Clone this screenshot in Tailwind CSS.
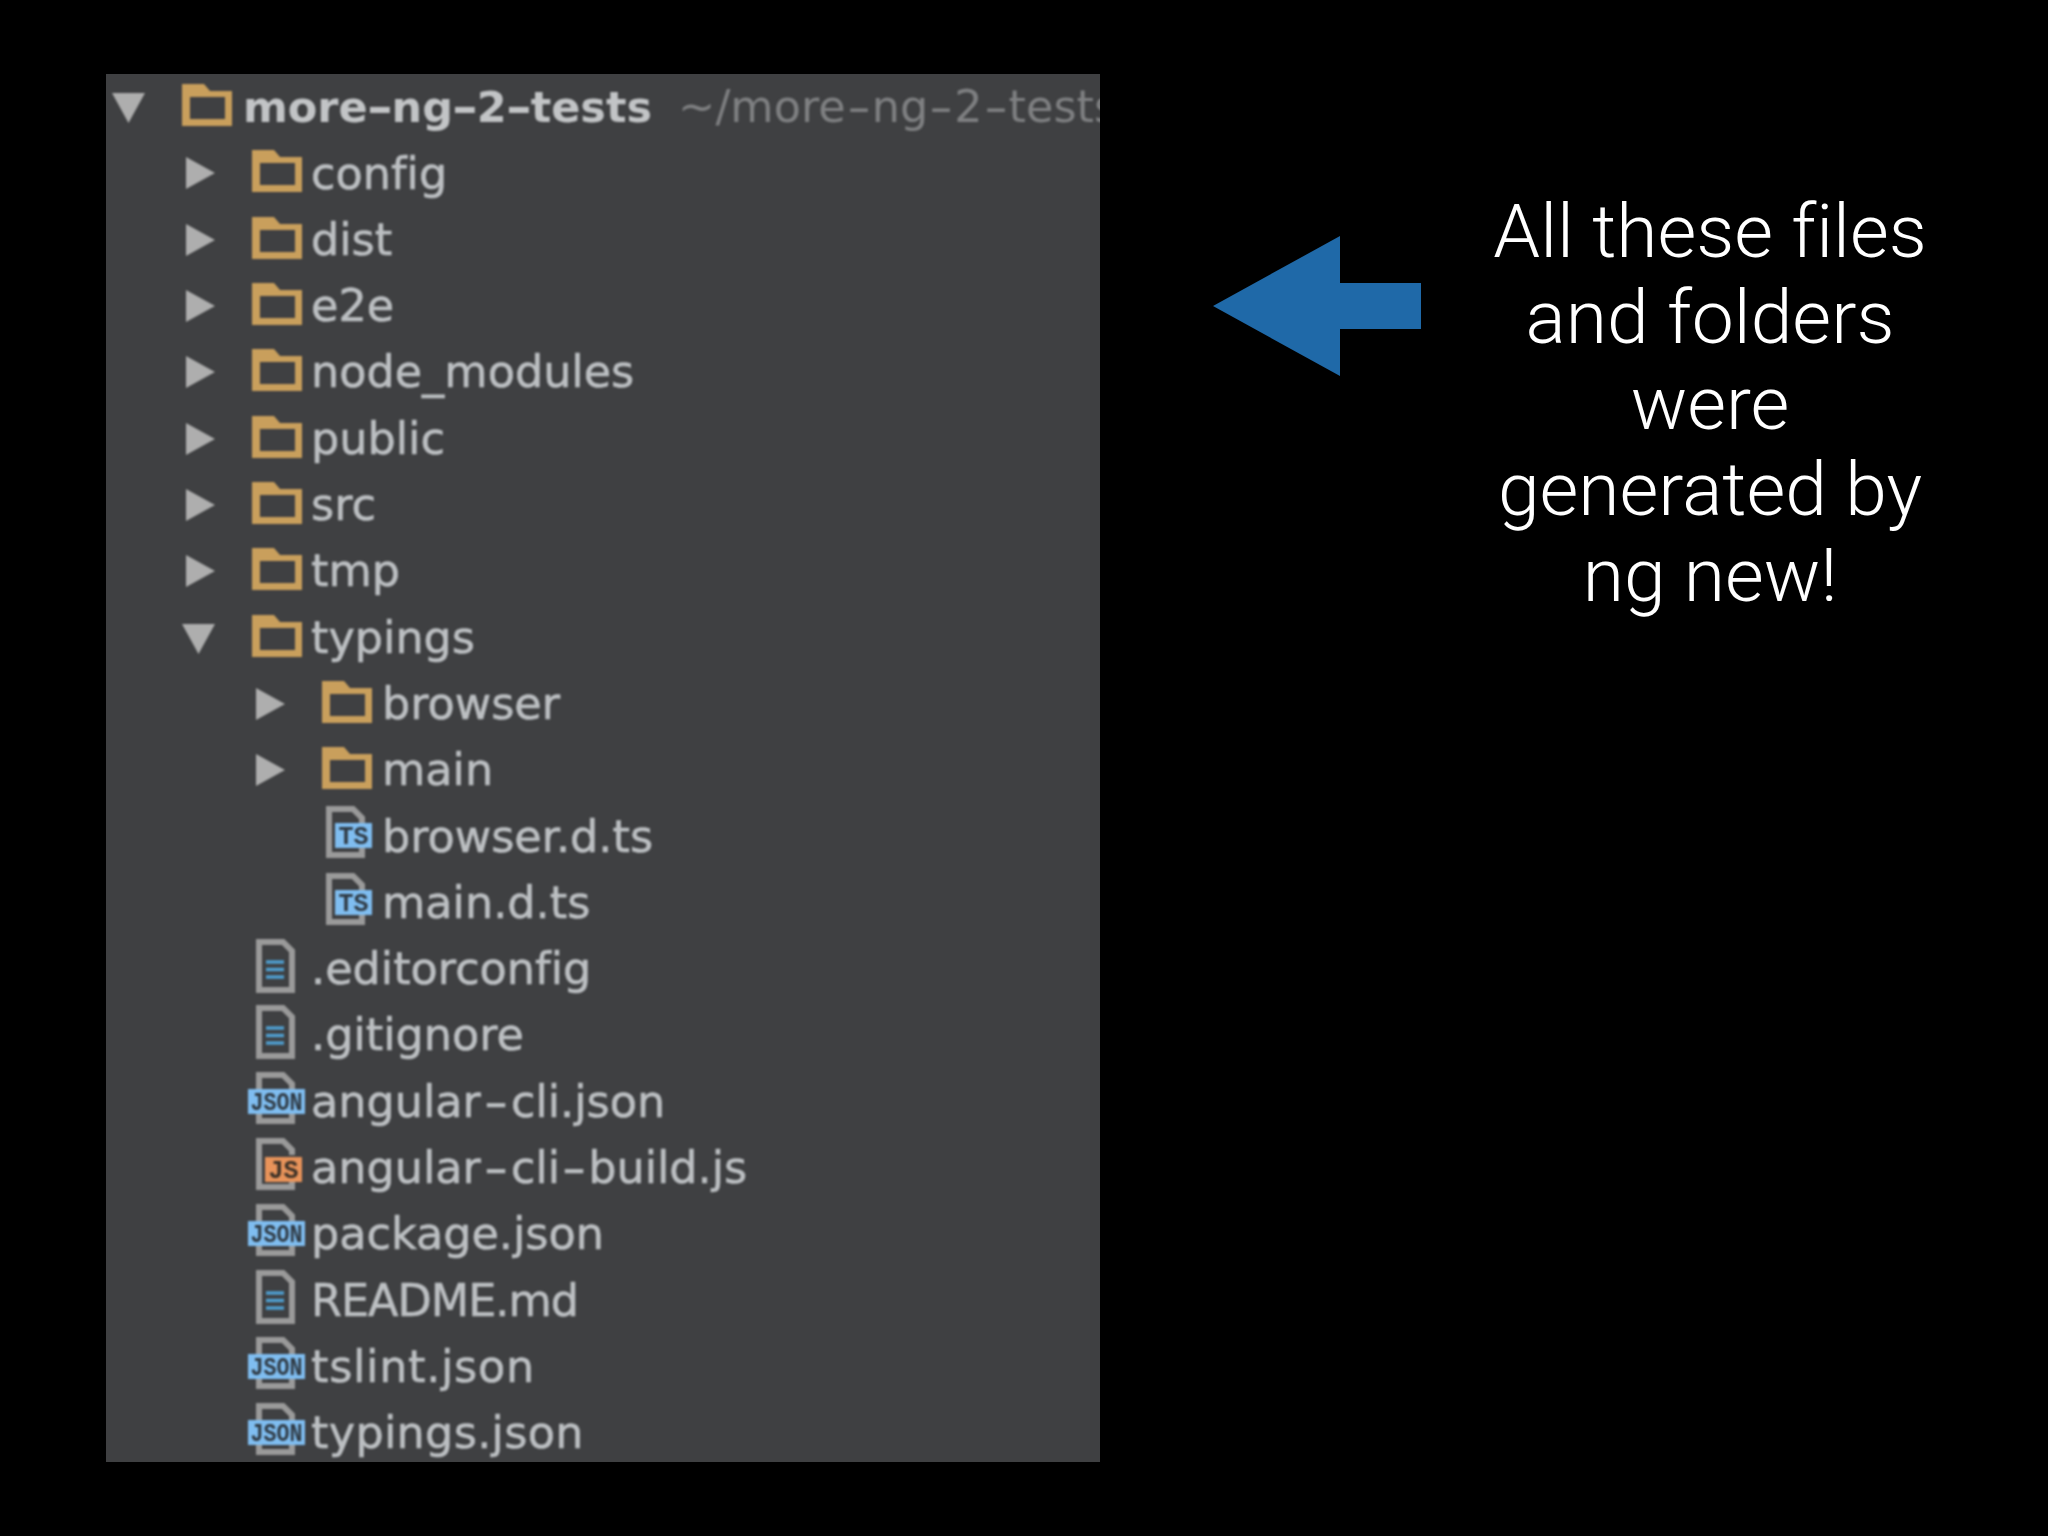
<!DOCTYPE html>
<html><head><meta charset="utf-8"><script src="https://cdn.jsdelivr.net/npm/@tailwindcss/browser@4"></script></head>
<body class="bg-black m-0">
<div class="w-[2048px] h-[1536px] bg-black flex items-start overflow-hidden [font-variant-ligatures:none]">
<div class="ml-[106px] mt-[74px] w-[994px] h-[1388px] bg-[#3f4042] overflow-hidden shrink-0">
<div class="blur-[1px] h-[1388px] font-['DejaVu_Sans',sans-serif] text-[44.5px] text-[#bcbfc2] [-webkit-text-stroke:0.6px_#bcbfc2] whitespace-nowrap">

<div class="h-[66.3px] flex items-center pl-[6px]"><svg class="w-[34px] h-[34px] shrink-0" viewBox="0 0 34 34"><path d="M0 3H33L16.500 33Z" fill="#aeaeae"/></svg><div class="w-[32px] shrink-0"></div><svg class="w-[60px] h-[60px] shrink-0" viewBox="0 0 60 60"><path fill-rule="evenodd" d="M4 7H26L32 14H54V49H4ZM12 20V42H47V20Z" fill="#c99f5c"/></svg><span class="ml-[5px] font-bold text-[43px] text-[#c2c4c6] [-webkit-text-stroke:0px]">more<span class="inline-block scale-x-[1.5] mx-[3px]">-</span>ng<span class="inline-block scale-x-[1.5] mx-[3px]">-</span>2<span class="inline-block scale-x-[1.5] mx-[3px]">-</span>tests</span><span class="ml-[26px] text-[#7f8082] [-webkit-text-stroke:0px]">~/more<span class="inline-block scale-x-[1.5] mx-[5px]">-</span>ng<span class="inline-block scale-x-[1.5] mx-[5px]">-</span>2<span class="inline-block scale-x-[1.5] mx-[5px]">-</span>tests</span></div>

<div class="h-[66.3px] flex items-center pl-[76px]"><svg class="w-[34px] h-[34px] shrink-0" viewBox="0 0 34 34"><path d="M4 1V33L33 17Z" fill="#aeaeae"/></svg><div class="w-[32px] shrink-0"></div><svg class="w-[60px] h-[60px] shrink-0" viewBox="0 0 60 60"><path fill-rule="evenodd" d="M4 7H26L32 14H54V49H4ZM12 20V42H47V20Z" fill="#c99f5c"/></svg><span class="ml-[3px] mt-[1px]">config</span></div>
<div class="h-[66.3px] flex items-center pl-[76px]"><svg class="w-[34px] h-[34px] shrink-0" viewBox="0 0 34 34"><path d="M4 1V33L33 17Z" fill="#aeaeae"/></svg><div class="w-[32px] shrink-0"></div><svg class="w-[60px] h-[60px] shrink-0" viewBox="0 0 60 60"><path fill-rule="evenodd" d="M4 7H26L32 14H54V49H4ZM12 20V42H47V20Z" fill="#c99f5c"/></svg><span class="ml-[3px] mt-[1px]">dist</span></div>
<div class="h-[66.3px] flex items-center pl-[76px]"><svg class="w-[34px] h-[34px] shrink-0" viewBox="0 0 34 34"><path d="M4 1V33L33 17Z" fill="#aeaeae"/></svg><div class="w-[32px] shrink-0"></div><svg class="w-[60px] h-[60px] shrink-0" viewBox="0 0 60 60"><path fill-rule="evenodd" d="M4 7H26L32 14H54V49H4ZM12 20V42H47V20Z" fill="#c99f5c"/></svg><span class="ml-[3px] mt-[1px]">e2e</span></div>
<div class="h-[66.3px] flex items-center pl-[76px]"><svg class="w-[34px] h-[34px] shrink-0" viewBox="0 0 34 34"><path d="M4 1V33L33 17Z" fill="#aeaeae"/></svg><div class="w-[32px] shrink-0"></div><svg class="w-[60px] h-[60px] shrink-0" viewBox="0 0 60 60"><path fill-rule="evenodd" d="M4 7H26L32 14H54V49H4ZM12 20V42H47V20Z" fill="#c99f5c"/></svg><span class="ml-[3px] mt-[1px]">node_modules</span></div>
<div class="h-[66.3px] flex items-center pl-[76px]"><svg class="w-[34px] h-[34px] shrink-0" viewBox="0 0 34 34"><path d="M4 1V33L33 17Z" fill="#aeaeae"/></svg><div class="w-[32px] shrink-0"></div><svg class="w-[60px] h-[60px] shrink-0" viewBox="0 0 60 60"><path fill-rule="evenodd" d="M4 7H26L32 14H54V49H4ZM12 20V42H47V20Z" fill="#c99f5c"/></svg><span class="ml-[3px] mt-[1px]">public</span></div>
<div class="h-[66.3px] flex items-center pl-[76px]"><svg class="w-[34px] h-[34px] shrink-0" viewBox="0 0 34 34"><path d="M4 1V33L33 17Z" fill="#aeaeae"/></svg><div class="w-[32px] shrink-0"></div><svg class="w-[60px] h-[60px] shrink-0" viewBox="0 0 60 60"><path fill-rule="evenodd" d="M4 7H26L32 14H54V49H4ZM12 20V42H47V20Z" fill="#c99f5c"/></svg><span class="ml-[3px] mt-[1px]">src</span></div>
<div class="h-[66.3px] flex items-center pl-[76px]"><svg class="w-[34px] h-[34px] shrink-0" viewBox="0 0 34 34"><path d="M4 1V33L33 17Z" fill="#aeaeae"/></svg><div class="w-[32px] shrink-0"></div><svg class="w-[60px] h-[60px] shrink-0" viewBox="0 0 60 60"><path fill-rule="evenodd" d="M4 7H26L32 14H54V49H4ZM12 20V42H47V20Z" fill="#c99f5c"/></svg><span class="ml-[3px] mt-[1px]">tmp</span></div>
<div class="h-[66.3px] flex items-center pl-[76px]"><svg class="w-[34px] h-[34px] shrink-0" viewBox="0 0 34 34"><path d="M0 3H33L16.500 33Z" fill="#aeaeae"/></svg><div class="w-[32px] shrink-0"></div><svg class="w-[60px] h-[60px] shrink-0" viewBox="0 0 60 60"><path fill-rule="evenodd" d="M4 7H26L32 14H54V49H4ZM12 20V42H47V20Z" fill="#c99f5c"/></svg><span class="ml-[3px] mt-[1px]">typings</span></div>

<div class="h-[66.3px] flex items-center pl-[146px]"><svg class="w-[34px] h-[34px] shrink-0" viewBox="0 0 34 34"><path d="M4 1V33L33 17Z" fill="#aeaeae"/></svg><div class="w-[32px] shrink-0"></div><svg class="w-[60px] h-[60px] shrink-0" viewBox="0 0 60 60"><path fill-rule="evenodd" d="M4 7H26L32 14H54V49H4ZM12 20V42H47V20Z" fill="#c99f5c"/></svg><span class="ml-[4px] mt-[1px]">browser</span></div>
<div class="h-[66.3px] flex items-center pl-[146px]"><svg class="w-[34px] h-[34px] shrink-0" viewBox="0 0 34 34"><path d="M4 1V33L33 17Z" fill="#aeaeae"/></svg><div class="w-[32px] shrink-0"></div><svg class="w-[60px] h-[60px] shrink-0" viewBox="0 0 60 60"><path fill-rule="evenodd" d="M4 7H26L32 14H54V49H4ZM12 20V42H47V20Z" fill="#c99f5c"/></svg><span class="ml-[4px] mt-[1px]">main</span></div>
<div class="h-[66.3px] flex items-center pl-[212px]"><svg class="w-[60px] h-[60px] shrink-0" viewBox="0 0 60 60"><path d="M44 17V12L35 3H11V49H44V42" fill="none" stroke="#9a9a9a" stroke-width="6"/><rect x="17" y="17" width="37" height="25" fill="#7fbdf0"/><text x="35.500" y="38" text-anchor="middle" textLength="30" lengthAdjust="spacingAndGlyphs" font-family="Liberation Mono" font-weight="700" font-size="25" stroke-width="0" fill="#2f3a44">TS</text></svg><span class="ml-[4px] mt-[1px]">browser.d.ts</span></div>
<div class="h-[66.3px] flex items-center pl-[212px]"><svg class="w-[60px] h-[60px] shrink-0" viewBox="0 0 60 60"><path d="M44 17V12L35 3H11V49H44V42" fill="none" stroke="#9a9a9a" stroke-width="6"/><rect x="17" y="17" width="37" height="25" fill="#7fbdf0"/><text x="35.500" y="38" text-anchor="middle" textLength="30" lengthAdjust="spacingAndGlyphs" font-family="Liberation Mono" font-weight="700" font-size="25" stroke-width="0" fill="#2f3a44">TS</text></svg><span class="ml-[4px] mt-[1px]">main.d.ts</span></div>

<div class="h-[66.3px] flex items-center pl-[142px]"><svg class="w-[60px] h-[60px] shrink-0" viewBox="0 0 60 60"><path d="M11 3H35L44 12V51H11Z" fill="none" stroke="#9a9a9a" stroke-width="6"/><path d="M18 23H36M18 30.500H36M18 38H36" stroke="#4f9fd0" stroke-width="3.500"/></svg><span class="ml-[3px] mt-[1px]">.editorconfig</span></div>
<div class="h-[66.3px] flex items-center pl-[142px]"><svg class="w-[60px] h-[60px] shrink-0" viewBox="0 0 60 60"><path d="M11 3H35L44 12V51H11Z" fill="none" stroke="#9a9a9a" stroke-width="6"/><path d="M18 23H36M18 30.500H36M18 38H36" stroke="#4f9fd0" stroke-width="3.500"/></svg><span class="ml-[3px] mt-[1px]">.gitignore</span></div>
<div class="h-[66.3px] flex items-center pl-[142px]"><svg class="w-[60px] h-[60px] shrink-0" viewBox="0 0 60 60"><path d="M11 17V3H35L44 12V17M11 42V49H44V42" fill="none" stroke="#9a9a9a" stroke-width="6"/><rect x="0" y="17" width="57" height="25" fill="#7fbdf0"/><text x="28.500" y="37.500" text-anchor="middle" textLength="52" lengthAdjust="spacingAndGlyphs" font-family="Liberation Mono" font-weight="700" font-size="25" fill="#2f3a44">JSON</text></svg><span class="ml-[3px] mt-[1px]">angular<span class="inline-block scale-x-[1.5] mx-[7px]">-</span>cli.json</span></div>
<div class="h-[66.3px] flex items-center pl-[142px]"><svg class="w-[60px] h-[60px] shrink-0" viewBox="0 0 60 60"><path d="M44 17V12L35 3H11V49H44V44" fill="none" stroke="#9a9a9a" stroke-width="6"/><rect x="17" y="19" width="37" height="25" fill="#e8935a"/><text x="35.500" y="40" text-anchor="middle" textLength="30" lengthAdjust="spacingAndGlyphs" font-family="Liberation Mono" font-weight="700" font-size="25" fill="#3a3026">JS</text></svg><span class="ml-[3px] mt-[1px]">angular<span class="inline-block scale-x-[1.5] mx-[7px]">-</span>cli<span class="inline-block scale-x-[1.5] mx-[6px]">-</span>build.js</span></div>
<div class="h-[66.3px] flex items-center pl-[142px]"><svg class="w-[60px] h-[60px] shrink-0" viewBox="0 0 60 60"><path d="M11 17V3H35L44 12V17M11 42V49H44V42" fill="none" stroke="#9a9a9a" stroke-width="6"/><rect x="0" y="17" width="57" height="25" fill="#7fbdf0"/><text x="28.500" y="37.500" text-anchor="middle" textLength="52" lengthAdjust="spacingAndGlyphs" font-family="Liberation Mono" font-weight="700" font-size="25" fill="#2f3a44">JSON</text></svg><span class="ml-[3px] mt-[1px]">package.json</span></div>
<div class="h-[66.3px] flex items-center pl-[142px]"><svg class="w-[60px] h-[60px] shrink-0" viewBox="0 0 60 60"><path d="M11 3H35L44 12V51H11Z" fill="none" stroke="#9a9a9a" stroke-width="6"/><path d="M18 23H36M18 30.500H36M18 38H36" stroke="#4f9fd0" stroke-width="3.500"/></svg><span class="ml-[3px] mt-[1px] tracking-[-1px]">README.md</span></div>
<div class="h-[66.3px] flex items-center pl-[142px]"><svg class="w-[60px] h-[60px] shrink-0" viewBox="0 0 60 60"><path d="M11 17V3H35L44 12V17M11 42V49H44V42" fill="none" stroke="#9a9a9a" stroke-width="6"/><rect x="0" y="17" width="57" height="25" fill="#7fbdf0"/><text x="28.500" y="37.500" text-anchor="middle" textLength="52" lengthAdjust="spacingAndGlyphs" font-family="Liberation Mono" font-weight="700" font-size="25" fill="#2f3a44">JSON</text></svg><span class="ml-[3px] mt-[1px] tracking-[0.7px]">tslint.json</span></div>
<div class="h-[66.3px] flex items-center pl-[142px]"><svg class="w-[60px] h-[60px] shrink-0" viewBox="0 0 60 60"><path d="M11 17V3H35L44 12V17M11 42V49H44V42" fill="none" stroke="#9a9a9a" stroke-width="6"/><rect x="0" y="17" width="57" height="25" fill="#7fbdf0"/><text x="28.500" y="37.500" text-anchor="middle" textLength="52" lengthAdjust="spacingAndGlyphs" font-family="Liberation Mono" font-weight="700" font-size="25" fill="#2f3a44">JSON</text></svg><span class="ml-[3px] mt-[1px] tracking-[0.3px]">typings.json</span></div>
</div>
</div>

<svg class="ml-[113px] mt-[236px] w-[208px] h-[140px] shrink-0" viewBox="0 0 208 140"><path d="M0 70L127 0V47H208V93H127V140Z" fill="#1f69a8"/></svg>

<div class="ml-[39px] mt-[188px] w-[500px] text-center text-white font-['Roboto',sans-serif] font-light text-[75px] leading-[86px]">All these files<br>and folders<br>were<br>generated by<br>ng new!</div>
</div>
</body></html>
